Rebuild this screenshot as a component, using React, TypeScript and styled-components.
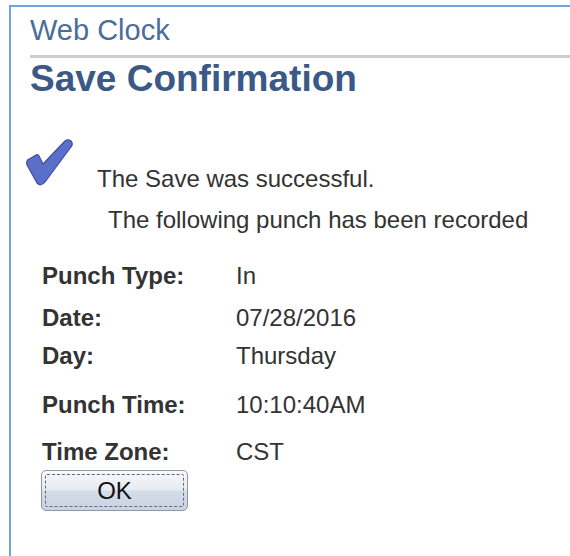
import React from "react";
import styled, { createGlobalStyle } from "styled-components";

const GlobalStyle = createGlobalStyle`
  html, body {
    margin: 0;
    padding: 0;
    background: #ffffff;
    overflow: hidden;
  }
  body {
    font-family: "Liberation Sans", Arial, sans-serif;
    color: #333333;
  }
`;

const Frame = styled.div`
  margin: 5px 0 0 9px;
  height: calc(100vh - 5px);
  border-top: 2px solid #6ea5dd;
  border-left: 2px solid #6ea5dd;
  padding-left: 19px;
  box-sizing: border-box;
`;

const PageTitle = styled.div`
  padding-top: 9px;
  font-size: 29px;
  line-height: 29px;
  color: #4c6c99;
`;

const Rule = styled.div`
  margin-top: 10px;
  height: 3px;
  background: #cccccc;
`;

const Heading = styled.h1`
  margin: 2px 0 0;
  font-size: 37px;
  line-height: 37px;
  font-weight: bold;
  color: #3a5987;
`;

const MessageRow = styled.div`
  display: flex;
  align-items: flex-start;
  margin-top: 40px;
  margin-left: -4px;
`;

const CheckMark = styled.svg`
  width: 48px;
  height: 50px;
  flex: none;
`;

const Message = styled.div<{ $indent?: number; $top?: number }>`
  font-size: 24px;
  line-height: 24px;
  color: #333333;
  margin-left: ${(p) => p.$indent ?? 0}px;
  margin-top: ${(p) => p.$top ?? 0}px;
`;

const Details = styled.div`
  display: grid;
  grid-template-columns: 194px auto;
  margin: 32px 0 0 12px;
`;

const Label = styled.div<{ $top: number }>`
  font-size: 24px;
  line-height: 24px;
  font-weight: bold;
  color: #333333;
  margin-top: ${(p) => p.$top}px;
`;

const Value = styled.div<{ $top: number }>`
  font-size: 24px;
  line-height: 24px;
  color: #333333;
  margin-top: ${(p) => p.$top}px;
`;

const OkButton = styled.button`
  position: relative;
  display: block;
  margin: 6px 0 0 11px;
  width: 147px;
  height: 41px;
  padding: 0;
  border: 1px solid #8f98a8;
  border-radius: 5px;
  background: linear-gradient(#f6f8fb 0%, #e6ebf2 48%, #d3dcea 52%, #c9d3e2 100%);
  font-family: "Liberation Sans", Arial, sans-serif;
  font-size: 24px;
  line-height: 24px;
  color: #111111;
  cursor: pointer;

  /* keyboard-focus ring drawn inside the face */
  &::after {
    content: "";
    position: absolute;
    inset: 3px;
    border: 1px dashed #6a6a6a;
    border-radius: 2px;
    pointer-events: none;
  }
`;

const rows: { label: string; value: string; top: number }[] = [
  { label: "Punch Type:", value: "In", top: 0 },
  { label: "Date:", value: "07/28/2016", top: 18 },
  { label: "Day:", value: "Thursday", top: 14 },
  { label: "Punch Time:", value: "10:10:40AM", top: 25 },
  { label: "Time Zone:", value: "CST", top: 23 },
];

export default function App() {
  return (
    <>
      <GlobalStyle />
      <Frame>
        <PageTitle>Web Clock</PageTitle>
        <Rule />
        <Heading>Save Confirmation</Heading>
        <MessageRow>
          <CheckMark viewBox="0 0 48 50" aria-hidden="true">
            <path
              d="M1.5 23 L10 18 Q12 17 13 19 L17 27 L39 4 Q42 1.5 45 4 Q47.5 7 45 10 L19 45 Q15 50 11 46 L1 28 Q0 25 1.5 23 Z"
              fill="#5b6fc8"
              stroke="#3f4f9f"
              strokeWidth="1.2"
              strokeLinejoin="round"
            />
          </CheckMark>
          <Message $indent={23} $top={30}>
            The Save was successful.
          </Message>
        </MessageRow>
        <Message $indent={78} $top={17}>
          The following punch has been recorded
        </Message>
        <Details>
          {rows.map((r) => (
            <React.Fragment key={r.label}>
              <Label $top={r.top}>{r.label}</Label>
              <Value $top={r.top}>{r.value}</Value>
            </React.Fragment>
          ))}
        </Details>
        <OkButton type="button">OK</OkButton>
      </Frame>
    </>
  );
}
